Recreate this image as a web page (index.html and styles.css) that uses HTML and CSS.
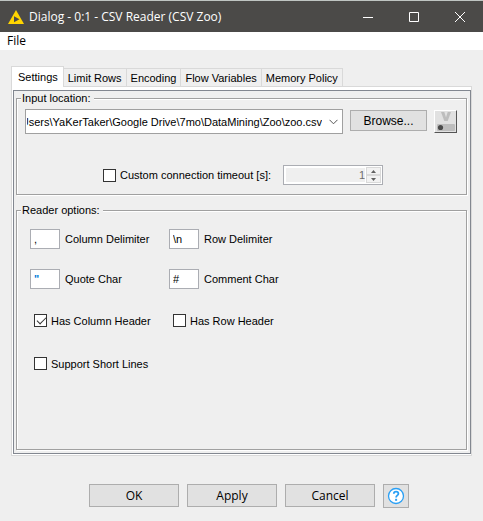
FILE: index.html
```html
<!DOCTYPE html>
<html lang="en">
<head>
<meta charset="utf-8">
<title>Dialog - 0:1 - CSV Reader (CSV Zoo)</title>
<link rel="stylesheet" href="styles.css">
</head>
<body>
<div class="window">
  <header class="titlebar">
    <svg class="app-icon" width="16" height="14" viewBox="0 0 16 14"><path d="M8 0L16 14H0Z" fill="#ffd500"/><path d="M6 6.2L11.5 9.2L6 12.2Z" fill="#4b4a48"/></svg>
    <h1 class="title">Dialog - 0:1 - CSV Reader (CSV Zoo)</h1>
    <div class="window-controls">
      <button class="window-button" aria-label="Minimize"><svg width="10" height="10" viewBox="0 0 10 10"><path d="M0 5.5H10"/></svg></button>
      <button class="window-button" aria-label="Maximize"><svg width="10" height="10" viewBox="0 0 10 10"><path d="M.5 .5H9.5V9.5H.5Z"/></svg></button>
      <button class="window-button" aria-label="Close"><svg width="10" height="10" viewBox="0 0 10 10"><path d="M0 0L10 10M10 0L0 10"/></svg></button>
    </div>
  </header>
  <nav class="menubar"><button class="menu">File</button></nav>
  <main class="content">
    <div class="tabs" role="tablist">
      <button class="tab tab-active" role="tab" aria-selected="true">Settings</button>
      <button class="tab" role="tab">Limit Rows</button>
      <button class="tab" role="tab">Encoding</button>
      <button class="tab" role="tab">Flow Variables</button>
      <button class="tab" role="tab">Memory Policy</button>
    </div>
    <div class="panel" role="tabpanel">
      <div class="panel-body">
        <fieldset class="group">
          <legend>Input location:</legend>
          <div class="location">
            <div class="combo">
              <input class="combo-input" type="text" dir="rtl" aria-label="Input location" value="Users\YaKerTaker\Google Drive\7mo\DataMining\Zoo\zoo.csv">
              <button class="combo-arrow" aria-label="Show recent locations"><svg width="9" height="6" viewBox="0 0 9 6"><path d="M.5 .8L4.5 4.8L8.5 .8" fill="none" stroke="#555"/></svg></button>
            </div>
            <button class="browse">Browse...</button>
            <button class="variable" aria-label="Flow variable"><svg width="21" height="21" viewBox="0 0 21 21"><path d="M6 1H9.3L11 6.5L12.7 1H16L12.7 10H9.3Z" fill="#bdbdbd"/><rect x="2" y="13" width="18" height="7" rx="1" fill="#bdbdbd"/><circle cx="5.5" cy="16.5" r="2.6" fill="#4a4a4a"/></svg></button>
          </div>
          <div class="timeout">
            <label class="check"><input type="checkbox">Custom connection timeout [s]:</label>
            <div class="spinner">
              <input class="spinner-input" type="text" value="1" aria-label="Timeout in seconds" disabled>
              <div class="spinner-buttons">
                <button class="step" aria-label="Increase" disabled><svg width="5" height="3" viewBox="0 0 5 3"><path d="M0 3L2.5 0L5 3Z"/></svg></button>
                <button class="step" aria-label="Decrease" disabled><svg width="5" height="3" viewBox="0 0 5 3"><path d="M0 0L2.5 3L5 0Z"/></svg></button>
              </div>
            </div>
          </div>
        </fieldset>
        <fieldset class="group group-fill">
          <legend>Reader options:</legend>
          <div class="options">
            <label class="field"><input type="text" value=",">Column Delimiter</label>
            <label class="field"><input type="text" value="\n">Row Delimiter</label>
            <label class="field"><input class="quote" type="text" value="&quot;">Quote Char</label>
            <label class="field"><input type="text" value="#">Comment Char</label>
            <label class="check option-check"><input type="checkbox" checked>Has Column Header</label>
            <label class="check option-check"><input type="checkbox">Has Row Header</label>
            <label class="check option-check"><input type="checkbox">Support Short Lines</label>
          </div>
        </fieldset>
      </div>
    </div>
  </main>
  <footer class="actions">
    <button class="action">OK</button>
    <button class="action">Apply</button>
    <button class="action">Cancel</button>
    <button class="help" aria-label="Help"><svg width="18" height="18" viewBox="0 0 18 18"><circle cx="9" cy="9" r="7.5" fill="#fff" stroke="#2aa0f5" stroke-width="1.3"/><path d="M6.8 6.8C6.8 3.9 11.4 4 11.4 6.7C11.4 8.4 9.1 8.5 9.1 10.5" fill="none" stroke="#2aa0f5" stroke-width="1.8"/><rect x="8.1" y="11.8" width="2" height="2" fill="#2aa0f5"/></svg></button>
  </footer>
</div>
</body>
</html>
```
FILE: styles.css
```css
* { box-sizing: border-box; }

body {
  margin: 0;
  background: #efefef;
  color: #000;
  font: 11px/14px "Liberation Sans", sans-serif;
}

button, input { font: inherit; color: inherit; margin: 0; padding: 0; border-radius: 0; }
button { display: flex; align-items: center; justify-content: center; border: 0; background: none; }
svg { display: block; flex: none; }

.window { display: flex; flex-direction: column; min-height: 100vh; }

.titlebar {
  display: flex;
  align-items: center;
  height: 32px;
  padding-left: 8px;
  border-top: 1px solid #bfc5c2;
  background: #4b4a48;
  color: #fff;
}
.title { flex: 1; margin: 0 0 0 5px; font: 12px/16px "Open Sans", sans-serif; }
.window-controls { display: flex; }
.window-button { width: 46px; height: 30px; }
.window-button path { fill: none; stroke: #fff; }

.menubar { display: flex; height: 18px; padding: 0 7px; background: #fff; }
.menu { font: 12px/18px "Open Sans", sans-serif; }

.content { flex: 1; display: flex; flex-direction: column; padding: 16px 11px 0; }

.tabs { display: flex; align-items: flex-end; }
.tab {
  height: 18px;
  padding: 0 4px;
  border: 1px solid #d9d9d9;
  border-width: 1px 1px 0 0;
}
.tab-active {
  position: relative;
  height: 21px;
  margin-bottom: -1px;
  padding: 0 5px 1px 6px;
  border-left-width: 1px;
  background: #fff;
}

.panel {
  flex: 1;
  display: flex;
  padding: 3px 0 1px 1px;
  border: 1px solid #d9d9d9;
  background: #fff;
}
.panel-body {
  flex: 1;
  display: flex;
  flex-direction: column;
  gap: 8px;
  padding: 0 3px 3px 2px;
  border: 1px solid #828790;
  background: #efefef;
}

.group {
  min-width: 0;
  margin: 0;
  padding: 4px 9px 9px 8px;
  border: 1px solid #a0a0a0;
  box-shadow: 1px 1px #fff, inset 1px 1px #fff;
}
.group-fill { flex: 1; }
.group legend { margin-left: -4px; padding: 0 3px 0 1px; background: #efefef; }

.location { display: flex; align-items: flex-start; gap: 7px; }
.combo { flex: 1; display: flex; height: 25px; border: 1px solid #a0a0a0; background: #fff; }
.combo-input { flex: 1; min-width: 0; padding: 0 2px 0 1px; border: 0; background: none; outline: 0; }
.combo-arrow { width: 18px; }
.browse { width: 77px; height: 21px; margin-top: 1px; border: 1px solid #adadad; background: #e1e1e1; font-size: 12px; }
.variable {
  width: 23px;
  height: 23px;
  margin-top: 1px;
  border: 1px solid;
  border-color: #fff #555 #555 #fff;
  background: #e1e1e1;
}

.timeout { display: flex; align-items: center; justify-content: center; gap: 12px; margin-top: 31px; padding-left: 4px; }
.check { display: flex; align-items: center; gap: 4px; }
.check input {
  appearance: none;
  width: 13px;
  height: 13px;
  border: 1px solid #333;
  background: #fff;
}
.check input:checked { position: relative; }
.check input:checked::after {
  content: "";
  position: absolute;
  left: 2px;
  top: 2px;
  width: 8px;
  height: 4px;
  border: solid #333;
  border-width: 0 0 1px 1px;
  transform: rotate(-45deg);
}

.spinner { display: flex; width: 100px; height: 20px; border: 1px solid #abadb3; background: #fff; padding: 1px; }
.spinner-input { flex: 1; min-width: 0; margin: 1px; border: 0; background: #efefef; color: #6d6d6d; text-align: right; }
.spinner-buttons { display: flex; flex-direction: column; width: 15px; }
.step { flex: 1; border: 1px solid #d9d9d9; background: #f2f2f2; }
.step path { fill: #606060; }

.options { display: grid; grid-template-columns: 139px 1fr; row-gap: 20px; padding: 8px 5px 40px; }
.field { display: flex; align-items: center; gap: 5px; }
.field input { width: 30px; height: 20px; padding: 0 3px; border: 1px solid #abadb3; background: #fff; }
.field .quote { color: #0078d7; font-weight: bold; }
.option-check { height: 23px; padding-left: 4px; }

.actions { display: flex; justify-content: center; gap: 8px; padding: 28px 0 13px 15px; }
.action, .help { border: 1px solid #adadad; background: #e1e1e1; }
.action { width: 90px; height: 23px; font: 12px/16px "Open Sans", sans-serif; }
.help { width: 26px; height: 24px; }
```
